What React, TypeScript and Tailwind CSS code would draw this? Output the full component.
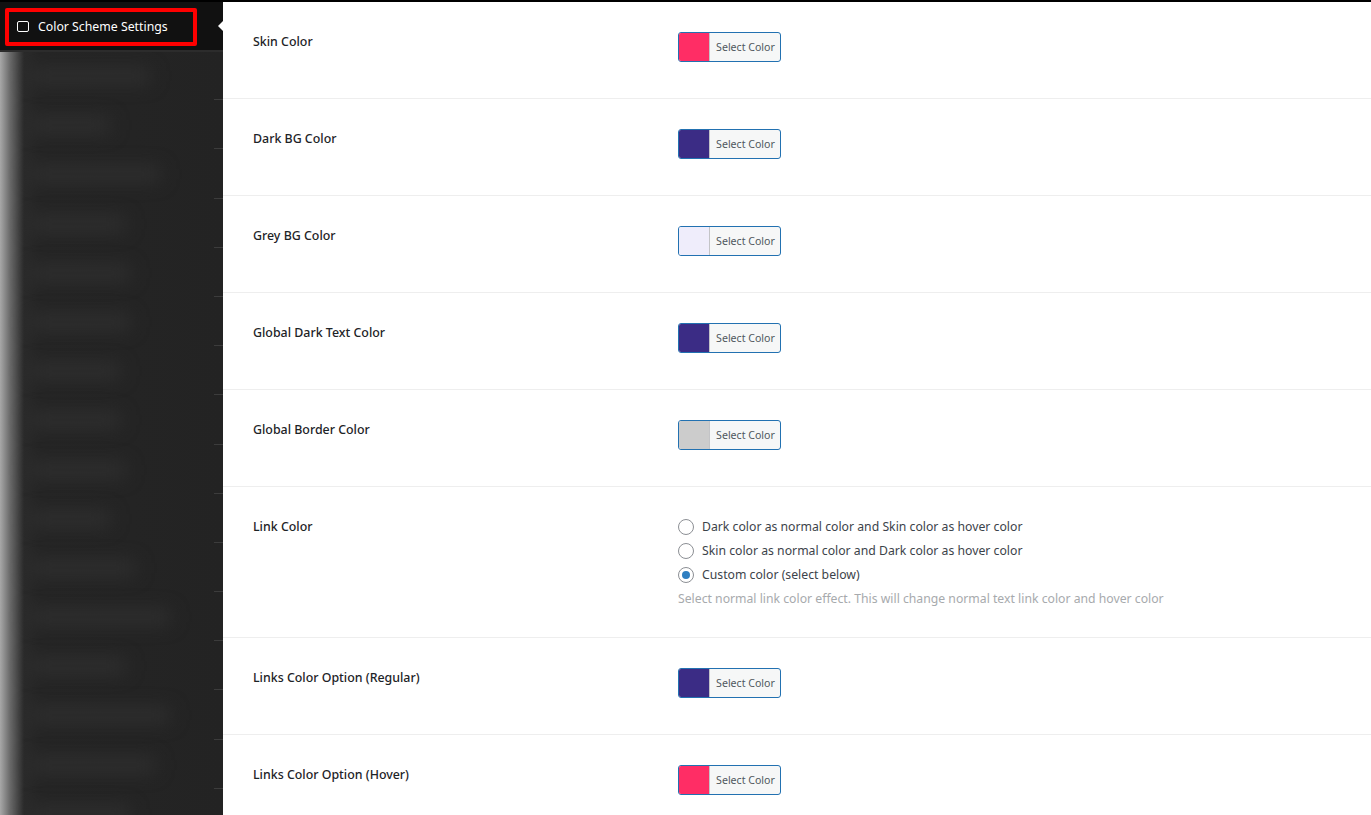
const font = "font-['Noto_Sans','Open_Sans',sans-serif]";

function ColorButton({ color }: { color: string }) {
  return (
    <button className="flex h-[30px] w-[103px] overflow-hidden rounded-[3px] border border-[#2271b1] bg-[#f6f7f7] p-0">
      <span className="h-full w-[31px] border-r border-[#c3c4c7]" style={{ background: color }} />
      <span className="flex-1 pl-[1px] text-center text-[10.6px] leading-[28px] text-[#50575e]">Select Color</span>
    </button>
  );
}

function ColorRow({ label, color }: { label: string; color: string }) {
  return (
    <div className="flex h-[97px] border-b border-[#eeeeee] pl-[30px]">
      <div className="w-[425px] pt-[31px] text-[12.4px] leading-[18px] font-medium text-[#1d2327]">{label}</div>
      <div className="pt-[30px]"><ColorButton color={color} /></div>
    </div>
  );
}

function Radio({ label, checked }: { label: string; checked?: boolean }) {
  return (
    <label className="flex h-[24px] items-center gap-[8px] text-[12.24px] text-[#3c434a]">
      <span className="flex h-4 w-4 items-center justify-center rounded-full border border-[#8c8f94] bg-white">
        {checked && <span className="h-2 w-2 rounded-full bg-[#2f7fc1]" />}
      </span>
      {label}
    </label>
  );
}

const blurs = [120, 80, 130, 95, 100, 100, 90, 90, 95, 80, 105, 140, 95, 140, 125, 100];

export default function App() {
  return (
    <div className={`flex h-[815px] w-[1371px] overflow-hidden bg-white ${font}`}>
      <aside className="flex w-[223px] shrink-0 flex-col bg-[#232323]">
        <div className="relative h-[52px] shrink-0 border-t-2 border-b-2 border-t-black border-b-[#2c2c2c] bg-[#111111] pt-[6px] pl-[5px]">
          <div className="flex h-[38px] w-[192px] items-center gap-[9px] rounded-[2px] border-[4px] border-[#ff0000] pl-[8px] text-[12.3px] text-white">
            <span className="mb-[2px] h-[11px] w-[12px] rounded-[2px] border border-white" />
            Color Scheme Settings
          </div>
          <span className="absolute top-[19px] right-0 h-0 w-0 border-y-[5px] border-r-[5px] border-y-transparent border-r-white" />
        </div>
        <div className="flex-1 overflow-hidden bg-[linear-gradient(to_right,#a8a8a8_0px,#6a6a6a_10px,#2a2a2a_24px,#252525_40px,#232323_100%)]">
          {blurs.map((w, i) => (
            <div key={i} className="relative h-[49.2px] pt-[17px] pl-[30px]">
              <div className="h-[14px] bg-[#303030] blur-[9px]" style={{ width: w }} />
              <span className="absolute right-0 bottom-[1px] h-px w-[9px] bg-[#3c3c3c]" />
            </div>
          ))}
        </div>
      </aside>
      <main className="min-w-0 flex-1 border-t-2 border-black">
        <ColorRow label="Skin Color" color="#ff2d65" />
        <ColorRow label="Dark BG Color" color="#3b2c85" />
        <ColorRow label="Grey BG Color" color="#efedfb" />
        <ColorRow label="Global Dark Text Color" color="#3b2c85" />
        <ColorRow label="Global Border Color" color="#cccccc" />
        <div className="flex h-[151px] border-b border-[#eeeeee] pl-[30px]">
          <div className="w-[425px] pt-[31px] text-[12.4px] leading-[18px] font-medium text-[#1d2327]">Link Color</div>
          <div className="pt-[28px]">
            <Radio label="Dark color as normal color and Skin color as hover color" />
            <Radio label="Skin color as normal color and Dark color as hover color" />
            <Radio label="Custom color (select below)" checked />
            <p className="mt-[3px] text-[12.22px] leading-[18px] text-[#a7aaad]">Select normal link color effect. This will change normal text link color and hover color</p>
          </div>
        </div>
        <ColorRow label="Links Color Option (Regular)" color="#3b2c85" />
        <ColorRow label="Links Color Option (Hover)" color="#ff2d65" />
      </main>
    </div>
  );
}
